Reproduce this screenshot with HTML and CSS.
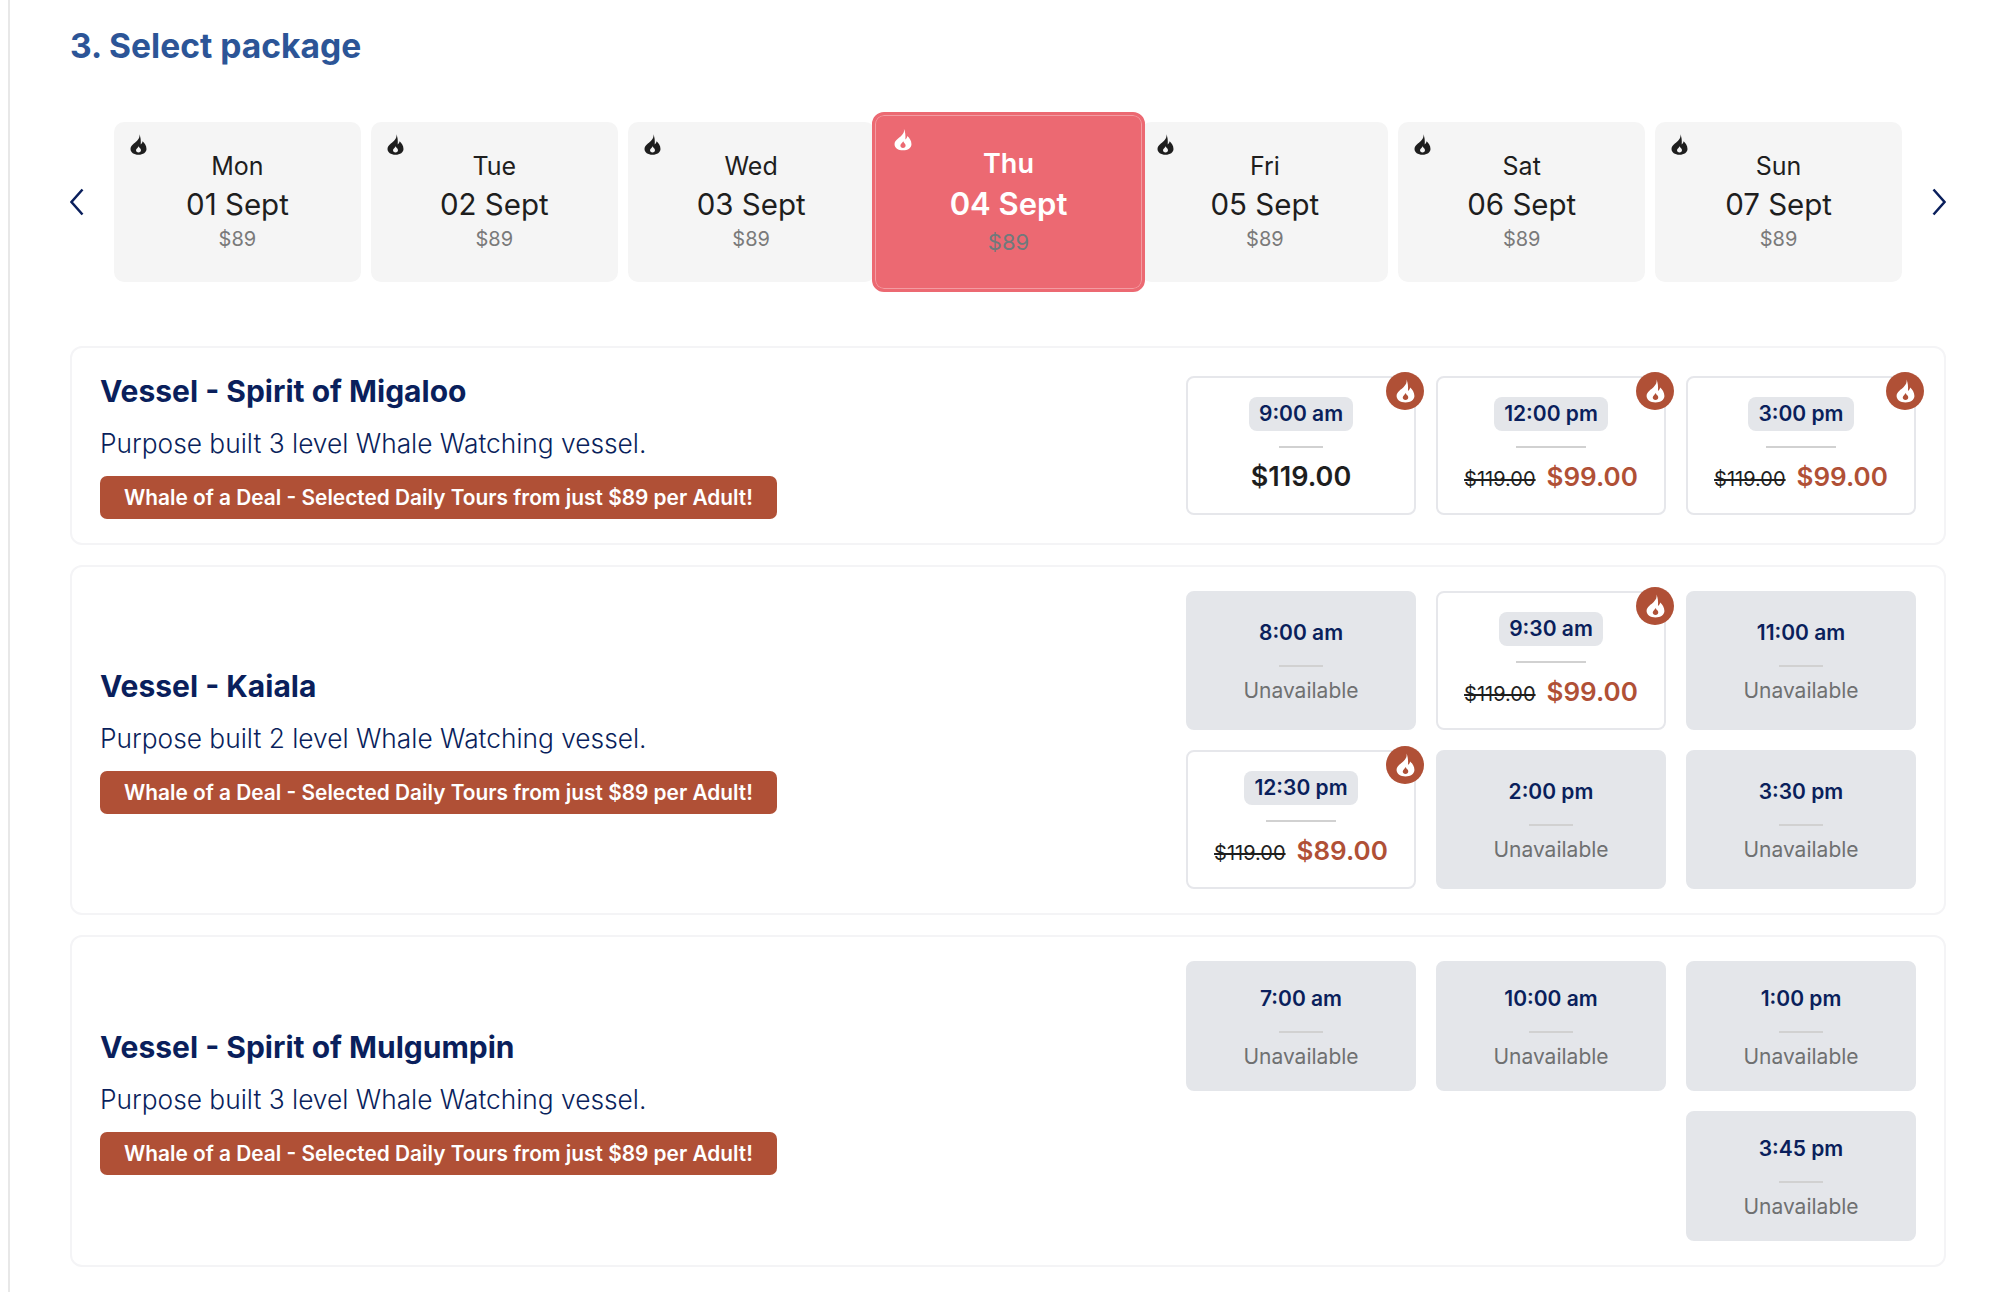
FILE: index.html
```html
<!DOCTYPE html>
<html lang="en">
<head>
    <title>Select package</title>
    <link rel="stylesheet" href="styles.css">
    <meta name="viewport" content="width=device-width, initial-scale=1.0" charset="utf-8">
</head>
<body>
    <svg class="defs" width="0" height="0">
        <symbol id="flame" viewBox="0 0 20 24">
            <path fill-rule="evenodd" d="M11 0c.8 3.600-.8 5.600-2.900 7.800C5.500 10.400 .6 13 .6 17.200 .6 21.200 4.600 24 10 24s9.400-2.800 9.400-6.800c0-4-2.300-7-4.600-9-.2 1.700-.9 2.900-2.200 3.700C13 7.800 12.500 3 11 0zM10 21.400c-1.700 0-2.900-1.100-2.900-2.600 0-1.800 1.900-2.600 3.200-4.800 .4 1.300 1 1.900 1.600 2.500 .7.700 1 1.500 1 2.300 0 1.500-1.200 2.600-2.900 2.600z"/>
        </symbol>
    </svg>

    <main class="section">
        <h2 class="section-title">3. Select package</h2>

        <!-- Date picker -->
        <div class="dates">
            <svg class="arrow" viewBox="0 0 14 28"><polyline points="12.500,1.500 1.500,14 12.500,26.500"/></svg>
            <div class="date-track">
                <div class="date-card">
                    <svg class="date-flame"><use href="#flame"/></svg>
                    <div class="date-day">Mon</div><div class="date-num">01 Sept</div><div class="date-price">$89</div>
                </div>
                <div class="date-card">
                    <svg class="date-flame"><use href="#flame"/></svg>
                    <div class="date-day">Tue</div><div class="date-num">02 Sept</div><div class="date-price">$89</div>
                </div>
                <div class="date-card">
                    <svg class="date-flame"><use href="#flame"/></svg>
                    <div class="date-day">Wed</div><div class="date-num">03 Sept</div><div class="date-price">$89</div>
                </div>
                <div class="date-card selected">
                    <svg class="date-flame"><use href="#flame"/></svg>
                    <div class="date-day">Thu</div><div class="date-num">04 Sept</div><div class="date-price">$89</div>
                </div>
                <div class="date-card">
                    <svg class="date-flame"><use href="#flame"/></svg>
                    <div class="date-day">Fri</div><div class="date-num">05 Sept</div><div class="date-price">$89</div>
                </div>
                <div class="date-card">
                    <svg class="date-flame"><use href="#flame"/></svg>
                    <div class="date-day">Sat</div><div class="date-num">06 Sept</div><div class="date-price">$89</div>
                </div>
                <div class="date-card">
                    <svg class="date-flame"><use href="#flame"/></svg>
                    <div class="date-day">Sun</div><div class="date-num">07 Sept</div><div class="date-price">$89</div>
                </div>
            </div>
            <svg class="arrow" viewBox="0 0 14 28"><polyline points="1.500,1.500 12.500,14 1.500,26.500"/></svg>
        </div>

        <!-- Vessels -->
        <div class="vessel">
            <div class="vessel-info">
                <h3 class="vessel-name">Vessel - Spirit of Migaloo</h3>
                <p class="vessel-desc">Purpose built 3 level Whale Watching vessel.</p>
                <span class="deal">Whale of a Deal - Selected Daily Tours from just $89 per Adult!</span>
            </div>
            <div class="slots">
                <div class="slot">
                    <span class="hot"><svg><use href="#flame"/></svg></span>
                    <span class="time pill">9:00 am</span><hr class="rule short">
                    <div class="price"><span class="now plain">$119.00</span></div>
                </div>
                <div class="slot">
                    <span class="hot"><svg><use href="#flame"/></svg></span>
                    <span class="time pill">12:00 pm</span><hr class="rule">
                    <div class="price"><s class="was">$119.00</s><span class="now">$99.00</span></div>
                </div>
                <div class="slot">
                    <span class="hot"><svg><use href="#flame"/></svg></span>
                    <span class="time pill">3:00 pm</span><hr class="rule">
                    <div class="price"><s class="was">$119.00</s><span class="now">$99.00</span></div>
                </div>
            </div>
        </div>

        <div class="vessel">
            <div class="vessel-info">
                <h3 class="vessel-name">Vessel - Kaiala</h3>
                <p class="vessel-desc">Purpose built 2 level Whale Watching vessel.</p>
                <span class="deal">Whale of a Deal - Selected Daily Tours from just $89 per Adult!</span>
            </div>
            <div class="slots">
                <div class="slot off"><span class="time">8:00 am</span><hr class="rule short"><div class="none">Unavailable</div></div>
                <div class="slot">
                    <span class="hot"><svg><use href="#flame"/></svg></span>
                    <span class="time pill">9:30 am</span><hr class="rule">
                    <div class="price"><s class="was">$119.00</s><span class="now">$99.00</span></div>
                </div>
                <div class="slot off"><span class="time">11:00 am</span><hr class="rule short"><div class="none">Unavailable</div></div>
                <div class="slot">
                    <span class="hot"><svg><use href="#flame"/></svg></span>
                    <span class="time pill">12:30 pm</span><hr class="rule">
                    <div class="price"><s class="was">$119.00</s><span class="now">$89.00</span></div>
                </div>
                <div class="slot off"><span class="time">2:00 pm</span><hr class="rule short"><div class="none">Unavailable</div></div>
                <div class="slot off"><span class="time">3:30 pm</span><hr class="rule short"><div class="none">Unavailable</div></div>
            </div>
        </div>

        <div class="vessel">
            <div class="vessel-info">
                <h3 class="vessel-name">Vessel - Spirit of Mulgumpin</h3>
                <p class="vessel-desc">Purpose built 3 level Whale Watching vessel.</p>
                <span class="deal">Whale of a Deal - Selected Daily Tours from just $89 per Adult!</span>
            </div>
            <div class="slots compact">
                <div class="slot off"><span class="time">7:00 am</span><hr class="rule short"><div class="none">Unavailable</div></div>
                <div class="slot off"><span class="time">10:00 am</span><hr class="rule short"><div class="none">Unavailable</div></div>
                <div class="slot off"><span class="time">1:00 pm</span><hr class="rule short"><div class="none">Unavailable</div></div>
                <div class="slot off last"><span class="time">3:45 pm</span><hr class="rule short"><div class="none">Unavailable</div></div>
            </div>
        </div>
    </main>
</body>
</html>
```
FILE: styles.css
```css
body {
    font-family: Inter, "Liberation Sans", sans-serif;
    margin: 0;
    padding: 0;
    background-color: #fff;
    color: #1e1e1e;
}
.defs {
    position: absolute;
}
.section {
    margin-left: 8px;
    height: 1292px;
    box-sizing: border-box;
    width: 1938px;
    border-left: 2px solid #e8e8e8;
    padding: 26px 0 0 60px;
}
.section-title {
    margin: 0 0 56px 0;
    font-size: 33.6px;
    line-height: 40px;
    font-weight: 700;
    color: #2c5597;
}

/* Date picker */
.dates {
    display: flex;
    align-items: center;
    gap: 30px;
    margin-bottom: 64px;
}
.arrow {
    width: 14px;
    height: 28px;
    flex: none;
    fill: none;
    stroke: #0a1f5c;
    stroke-width: 2.5;
}
.date-track {
    flex: 1;
    display: grid;
    grid-template-columns: repeat(7, 1fr);
    gap: 10px;
}
.date-card {
    position: relative;
    height: 160px;
    box-sizing: border-box;
    padding-top: 28px;
    background-color: #f5f5f5;
    border-radius: 10px;
    text-align: center;
}
.date-flame {
    position: absolute;
    top: 12px;
    left: 16px;
    width: 17px;
    height: 21px;
    fill: #1e1e1e;
}
.date-day {
    font-size: 25px;
    line-height: 32px;
}
.date-num {
    font-size: 29.5px;
    line-height: 38px;
    margin-top: 3px;
}
.date-price {
    font-size: 20px;
    line-height: 24px;
    margin-top: 4px;
    color: #7a7a7a;
}
.date-card.selected {
    z-index: 1;
    height: 180px;
    margin: -10px -14px -10px -13px;
    padding-top: 33px;
    background-color: #ec6972;
    border: 3px solid #ec6972;
    border-radius: 12px;
    box-shadow: inset 0 0 0 1px #f39ca2;
    color: #fff;
}
.selected .date-flame {
    top: 13px;
    left: 19px;
    width: 18px;
    height: 23px;
    fill: #fff;
}
.selected .date-day {
    font-size: 27px;
    font-weight: 600;
}
.selected .date-num {
    font-size: 31px;
    line-height: 42px;
    font-weight: 600;
    margin-top: 3px;
}
.selected .date-price {
    font-size: 22px;
    margin-top: 5px;
    color: #6f7a7c;
}

/* Vessel rows */
.vessel {
    display: flex;
    align-items: center;
    justify-content: space-between;
    box-sizing: border-box;
    width: 1876px;
    margin-bottom: 20px;
    padding: 24px 28px;
    border: 2px solid #f4f4f6;
    border-radius: 12px;
}
.vessel-info {
    flex: none;
}
.vessel-name {
    margin: 0;
    font-size: 30px;
    line-height: 38px;
    font-weight: 700;
    color: #0a1f5c;
}
.vessel-desc {
    margin: 16px 0 14px 0;
    font-size: 26.3px;
    line-height: 36px;
    font-weight: 300;
    color: #0a1f5c;
}
.deal {
    display: block;
    width: max-content;
    padding: 0 24px;
    font-size: 20.85px;
    line-height: 43px;
    font-weight: 600;
    color: #fff;
    background-color: #b05036;
    border-radius: 7px;
}
.slots {
    display: grid;
    grid-template-columns: repeat(3, 230px);
    grid-auto-rows: 139px;
    gap: 20px;
}
.slots.compact {
    grid-auto-rows: 130px;
}
.slot {
    position: relative;
    display: flex;
    flex-direction: column;
    align-items: center;
    justify-content: center;
    box-sizing: border-box;
    background-color: #fff;
    border: 2px solid #e6e7eb;
    border-radius: 8px;
}
.slot.off {
    background-color: #e4e6ea;
    border-color: #e4e6ea;
}
.slot.last {
    grid-column: 3;
}
.time {
    font-size: 21px;
    line-height: 34px;
    font-weight: 600;
    color: #0a1f5c;
}
.pill {
    padding: 0 10px;
    background-color: #e4e6ea;
    border-radius: 8px;
}
.rule {
    width: 70px;
    height: 2px;
    margin: 15px 0 0 0;
    border: none;
    background-color: #d1d1d1;
}
.rule.short {
    width: 44px;
}
.price {
    display: flex;
    align-items: baseline;
    gap: 11px;
    height: 35px;
    margin-top: 11px;
    line-height: 35px;
}
.was {
    font-size: 20px;
    line-height: 20px;
    color: #1e1e1e;
}
.now {
    font-size: 26px;
    font-weight: 600;
    color: #b05036;
}
.now.plain {
    font-size: 27px;
    color: #1e1e1e;
}
.none {
    margin-top: 9px;
    font-size: 21px;
    line-height: 29px;
    color: #6f7071;
}
.hot {
    position: absolute;
    top: -6px;
    right: -10px;
    width: 38px;
    height: 38px;
    display: flex;
    align-items: center;
    justify-content: center;
    background-color: #b05036;
    border-radius: 50%;
}
.hot svg {
    width: 19px;
    height: 24px;
    fill: #fff;
}
```
